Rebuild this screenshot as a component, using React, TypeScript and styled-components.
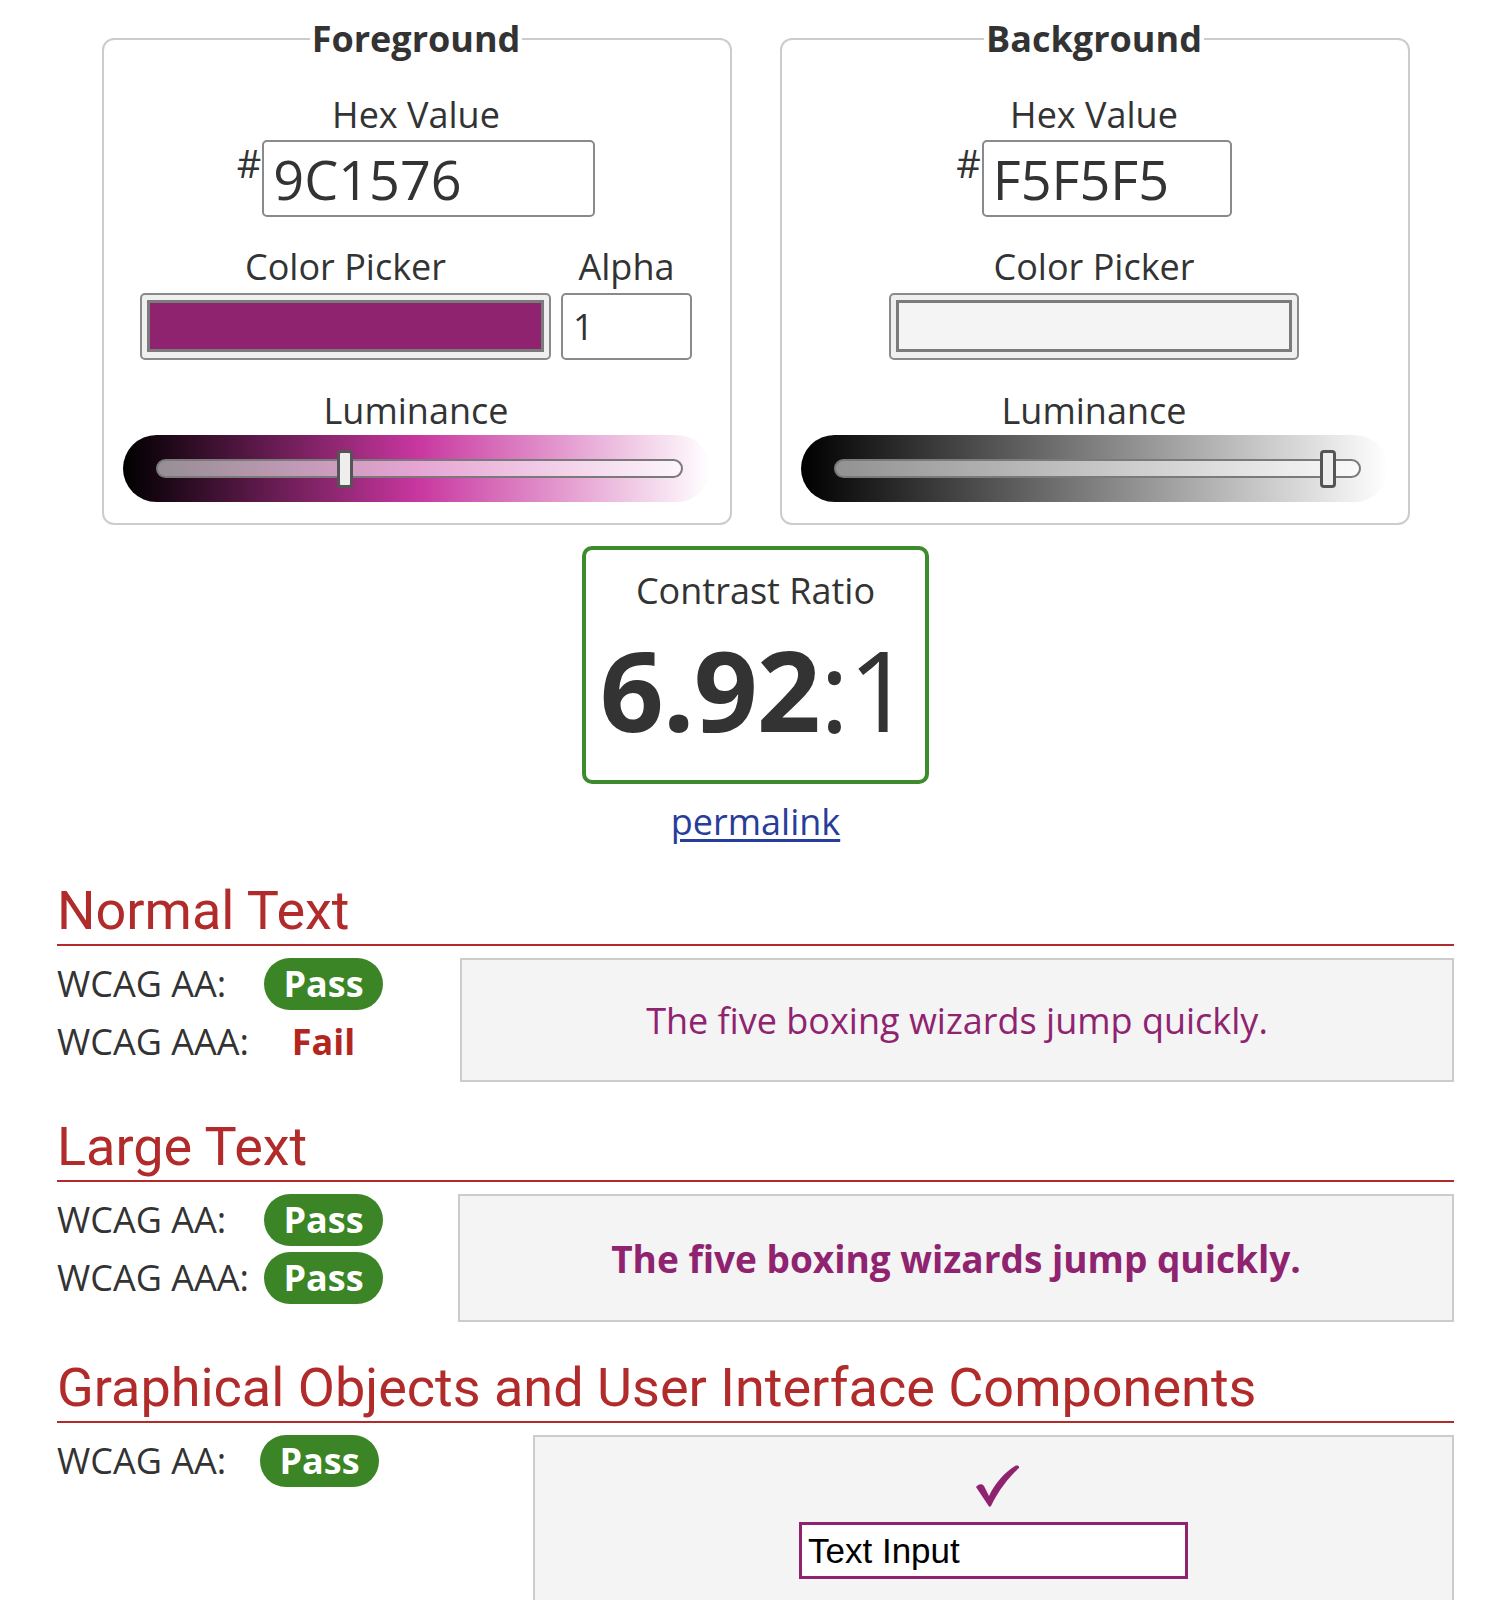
import React from "react";
import styled, { createGlobalStyle } from "styled-components";

const GlobalStyle = createGlobalStyle`
  html, body { margin: 0; padding: 0; background: #ffffff; }
  * { box-sizing: border-box; }
`;

const Page = styled.main`
  padding: 14px 32px 40px 57px;
  font-family: "Open Sans", "DejaVu Sans", sans-serif;
  font-size: 36px;
  color: #333333;
`;

const Pickers = styled.div`
  display: flex;
  justify-content: center;
  gap: 48px;
`;

const Fieldset = styled.fieldset`
  width: 630px;
  margin: 0;
  padding: 0 20px 21px 19px;
  border: 2px solid #cccccc;
  border-radius: 12px;
  min-width: 0;
`;

const Legend = styled.legend`
  margin: 0 auto;
  padding: 0 2px;
  font-weight: 700;
  font-size: 36px;
  line-height: 49px;
  color: #333333;
`;

const Stack = styled.div`
  display: flex;
  flex-direction: column;
  align-items: center;
  padding-top: 27px;
`;

const FieldLabel = styled.div`
  font-size: 36px;
  line-height: 49px;
  text-align: center;
  color: #333333;
`;

const HexRow = styled.div`
  display: flex;
  justify-content: center;
  align-items: flex-start;
  margin-top: 1px;
`;

const Hash = styled.span`
  font-size: 38px;
  line-height: 46px;
  margin-right: 1px;
`;

const HexInput = styled.input<{ $w: number }>`
  width: ${(p) => p.$w}px;
  height: 77px;
  border: 2px solid #8a8a8a;
  border-radius: 5px;
  padding: 0 9px;
  font-family: "Open Sans", sans-serif;
  font-size: 54px;
  color: #333333;
  background: #ffffff;
  outline: none;
`;

const PickerRow = styled.div`
  display: flex;
  justify-content: center;
  gap: 10px;
  margin-top: 25px;
`;

const PickerCol = styled.div`
  display: flex;
  flex-direction: column;
  align-items: center;
  gap: 2px;
`;

const Swatch = styled.div<{ $w: number }>`
  width: ${(p) => p.$w}px;
  height: 67px;
  border: 2px solid #8a8a8a;
  border-radius: 5px;
  background: #efefef;
  padding: 5px 5px 6px 5px;
`;

const SwatchFill = styled.div<{ $color: string }>`
  width: 100%;
  height: 100%;
  border: 3px solid #7b7b7b;
  background: ${(p) => p.$color};
`;

const AlphaInput = styled.input`
  width: 131px;
  height: 67px;
  border: 2px solid #8a8a8a;
  border-radius: 5px;
  padding: 0 10px;
  font-family: "Open Sans", sans-serif;
  font-size: 36px;
  color: #333333;
  background: #ffffff;
  outline: none;
`;

const LumLabel = styled(FieldLabel)`
  margin-top: 26px;
`;

const Slider = styled.div<{ $gradient: string }>`
  align-self: stretch;
  height: 67px;
  border-radius: 34px;
  background: ${(p) => p.$gradient};
  display: flex;
  align-items: center;
  padding: 0 27px 0 33px;
`;

const Track = styled.div`
  position: relative;
  flex: 1;
  height: 19px;
  border: 2px solid #7a7a7a;
  border-radius: 10px;
  background: rgba(255, 255, 255, 0.55);
`;

const Thumb = styled.div`
  position: absolute;
  top: 50%;
  width: 16px;
  height: 38px;
  transform: translate(-50%, -50%);
  border: 3px solid #555555;
  border-radius: 4px;
  background: #eeeeee;
`;

const RatioBox = styled.div`
  width: 347px;
  height: 238px;
  margin: 21px auto 0;
  border: 4px solid #3d8b2f;
  border-radius: 10px;
  text-align: center;
  padding-top: 16px;
`;

const RatioTitle = styled.div`
  font-size: 36px;
  line-height: 49px;
`;

const RatioValue = styled.div`
  margin-top: 12px;
  font-size: 112px;
  line-height: 123px;
  font-weight: 700;
  letter-spacing: -1px;
  white-space: nowrap;
`;

const RatioRest = styled.span`
  font-weight: 400;
`;

const LinkWrap = styled.div`
  text-align: center;
  margin-top: 13px;
  line-height: 49px;
`;

const Permalink = styled.a`
  color: #283c9a;
  text-decoration: underline;
  text-underline-offset: 4px;
`;

const Section = styled.section<{ $top: number }>`
  margin-top: ${(p) => p.$top}px;
`;

const Heading = styled.h2`
  margin: 0;
  font-family: Roboto, "Liberation Sans", sans-serif;
  font-weight: 400;
  font-size: 54px;
  line-height: 62px;
  color: #b12b2b;
  padding-bottom: 2px;
  border-bottom: 2px solid #b12b2b;
  white-space: nowrap;
`;

const ResultRow = styled.div`
  display: flex;
  align-items: flex-start;
  margin-top: 12px;
`;

const Results = styled.div<{ $w: number; $label: number }>`
  width: ${(p) => p.$w}px;
  flex: none;
  display: grid;
  grid-template-columns: ${(p) => p.$label}px 115px;
  row-gap: 6px;
  align-items: center;
`;

const ResultLabel = styled.div`
  font-size: 36px;
  line-height: 52px;
  white-space: nowrap;
`;

const PassBadge = styled.span`
  justify-self: center;
  display: inline-block;
  padding: 0 19px;
  border-radius: 26px;
  background: #3b8526;
  color: #ffffff;
  font-weight: 700;
  font-size: 36px;
  line-height: 52px;
`;

const FailText = styled.span`
  justify-self: center;
  color: #b3261e;
  font-weight: 700;
  font-size: 36px;
  line-height: 52px;
`;

const SampleBox = styled.div<{ $h: number; $size: number; $bold?: boolean }>`
  flex: 1;
  height: ${(p) => p.$h}px;
  display: flex;
  align-items: center;
  justify-content: center;
  background: #f4f4f4;
  border: 2px solid #cccccc;
  color: #8f2370;
  font-size: ${(p) => p.$size}px;
  font-weight: ${(p) => (p.$bold ? 700 : 400)};
`;

const UiBox = styled.div`
  flex: 1;
  display: flex;
  flex-direction: column;
  align-items: center;
  padding: 28px 0 30px;
  background: #f4f4f4;
  border: 2px solid #cccccc;
`;

const CheckIcon = styled.svg`
  width: 44px;
  height: 42px;
  margin-left: 9px;
`;

const TextInput = styled.input`
  margin-top: 15px;
  width: 389px;
  height: 57px;
  border: 3px solid #8f2370;
  padding: 0 6px;
  font-family: "Liberation Sans", Arial, sans-serif;
  font-size: 35px;
  color: #000000;
  background: #ffffff;
  outline: none;
`;

type Picker = {
  title: string;
  hex: string;
  hexWidth: number;
  swatch: string;
  swatchWidth: number;
  alpha: boolean;
  gradient: string;
  lum: number;
};

const pickers: Picker[] = [
  {
    title: "Foreground",
    hex: "9C1576",
    hexWidth: 333,
    swatch: "#8f2370",
    swatchWidth: 411,
    alpha: true,
    gradient: "linear-gradient(to right, #000000 0%, #c8369f 50%, #ffffff 100%)",
    lum: 35.9,
  },
  {
    title: "Background",
    hex: "F5F5F5",
    hexWidth: 250,
    swatch: "#f4f4f4",
    swatchWidth: 410,
    alpha: false,
    gradient: "linear-gradient(to right, #000000 0%, #ffffff 100%)",
    lum: 94.1,
  },
];

function PickerPanel({ p }: { p: Picker }) {
  return (
    <Fieldset>
      <Legend>{p.title}</Legend>
      <Stack>
        <FieldLabel>Hex Value</FieldLabel>
        <HexRow>
          <Hash>#</Hash>
          <HexInput $w={p.hexWidth} defaultValue={p.hex} aria-label={`${p.title} hex`} />
        </HexRow>
        <PickerRow>
          <PickerCol>
            <FieldLabel>Color Picker</FieldLabel>
            <Swatch $w={p.swatchWidth}>
              <SwatchFill $color={p.swatch} />
            </Swatch>
          </PickerCol>
          {p.alpha && (
            <PickerCol>
              <FieldLabel>Alpha</FieldLabel>
              <AlphaInput defaultValue="1" aria-label="Alpha" />
            </PickerCol>
          )}
        </PickerRow>
        <LumLabel>Luminance</LumLabel>
        <Slider $gradient={p.gradient}>
          <Track>
            <Thumb style={{ left: `${p.lum}%` }} />
          </Track>
        </Slider>
      </Stack>
    </Fieldset>
  );
}

export default function App() {
  return (
    <>
      <GlobalStyle />
      <Page>
        <Pickers>
          {pickers.map((p) => (
            <PickerPanel key={p.title} p={p} />
          ))}
        </Pickers>

        <RatioBox>
          <RatioTitle>Contrast Ratio</RatioTitle>
          <RatioValue>
            6.92<RatioRest>:1</RatioRest>
          </RatioValue>
        </RatioBox>
        <LinkWrap>
          <Permalink href="#">permalink</Permalink>
        </LinkWrap>

        <Section $top={34}>
          <Heading>Normal Text</Heading>
          <ResultRow>
            <Results $w={403} $label={209}>
              <ResultLabel>WCAG AA:</ResultLabel>
              <PassBadge>Pass</PassBadge>
              <ResultLabel>WCAG AAA:</ResultLabel>
              <FailText>Fail</FailText>
            </Results>
            <SampleBox $h={124} $size={36}>
              The five boxing wizards jump quickly.
            </SampleBox>
          </ResultRow>
        </Section>

        <Section $top={34}>
          <Heading>Large Text</Heading>
          <ResultRow>
            <Results $w={401} $label={209}>
              <ResultLabel>WCAG AA:</ResultLabel>
              <PassBadge>Pass</PassBadge>
              <ResultLabel>WCAG AAA:</ResultLabel>
              <PassBadge>Pass</PassBadge>
            </Results>
            <SampleBox $h={128} $size={37} $bold>
              The five boxing wizards jump quickly.
            </SampleBox>
          </ResultRow>
        </Section>

        <Section $top={35}>
          <Heading>Graphical Objects and User Interface Components</Heading>
          <ResultRow>
            <Results $w={476} $label={205}>
              <ResultLabel>WCAG AA:</ResultLabel>
              <PassBadge>Pass</PassBadge>
            </Results>
            <UiBox>
              <CheckIcon viewBox="0 0 44 42" aria-hidden="true">
                <path
                  d="M0 22 C2 19 6 18 8 21 L13 31 C19 18 29 7 39 1 C41 0 44 1 43 3 C33 12 22 26 15 41 C14 42 13 42 12 40 Z"
                  fill="#8f2370"
                />
              </CheckIcon>
              <TextInput defaultValue="Text Input" aria-label="Text Input" />
            </UiBox>
          </ResultRow>
        </Section>
      </Page>
    </>
  );
}
